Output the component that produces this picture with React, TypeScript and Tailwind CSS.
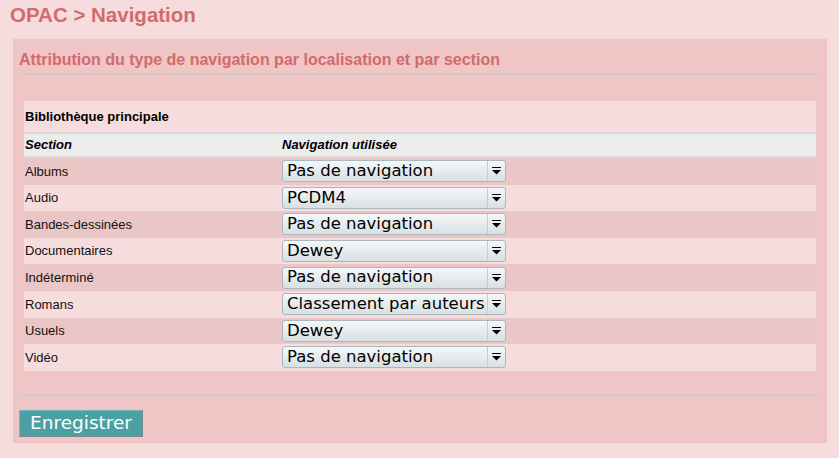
const rows = [
  { section: "Albums", nav: "Pas de navigation" },
  { section: "Audio", nav: "PCDM4" },
  { section: "Bandes-dessinées", nav: "Pas de navigation" },
  { section: "Documentaires", nav: "Dewey" },
  { section: "Indéterminé", nav: "Pas de navigation" },
  { section: "Romans", nav: "Classement par auteurs" },
  { section: "Usuels", nav: "Dewey" },
  { section: "Vidéo", nav: "Pas de navigation" },
];

function FakeSelect({ value }: { value: string }) {
  return (
    <div className="flex h-[22px] w-[224px] items-stretch rounded-[3px] border border-[#a9b8bf] bg-gradient-to-b from-[#f5f7f8] to-[#d8e0e3]">
      <div className="flex flex-1 items-center overflow-hidden whitespace-nowrap pl-[4px] font-['DejaVu_Sans',sans-serif] text-[16.5px] leading-none text-black">
        {value}
      </div>
      <div className="flex w-[18px] flex-col items-center justify-center border-l border-[#c2ced3]">
        <div className="h-px w-[9px] bg-black"></div>
        <svg width="9" height="5" viewBox="0 0 9 5" className="mt-[2px]">
          <path d="M0 0 H9 L4.5 4.5 Z" fill="#000" />
        </svg>
      </div>
    </div>
  );
}

export default function App() {
  return (
    <div className="h-[458px] w-[839px] bg-[#f7dcdd] pt-[2px] font-['Liberation_Sans',Arial,sans-serif]">
      <h1 className="h-[37px] pl-[10px] text-[20.5px] font-bold leading-[25px] text-[#d26b6c]">
        OPAC &gt; Navigation
      </h1>

      <div className="ml-[13px] w-[814px] bg-[#efc5c5] px-[6px] pt-[10px] pb-[6px]">
        <h2 className="h-[26px] border-b-2 border-[#cdcccb] text-[16px] font-bold leading-[22px] text-[#d26b6c]">
          Attribution du type de navigation par localisation et par section
        </h2>

        <div className="mx-[5px] mt-[26px] w-[792px]">
          <div className="flex h-[31px] items-center bg-[#f7dcdd] pl-[1px] pt-[1px] text-[13px] font-bold text-black">
            Bibliothèque principale
          </div>
          <div className="flex h-[26px] items-center border-y-2 border-[#d7d7d7] bg-[#ececec] text-[13px] font-bold italic text-black">
            <div className="w-[258px] pl-[1px]">Section</div>
            <div>Navigation utilisée</div>
          </div>
          {rows.map((row, i) => (
            <div
              key={row.section}
              className={`flex h-[26.6px] items-center text-[13px] text-[#111] ${
                i % 2 === 0 ? "bg-[#ebc6c6]" : "bg-[#f7dcdd]"
              }`}
            >
              <div className="w-[258px] pl-[1px]">{row.section}</div>
              <FakeSelect value={row.nav} />
            </div>
          ))}
        </div>

        <div className="mt-[23px] h-[2px] bg-[#cdcccb]"></div>

        <button className="mt-[14px] h-[27px] w-[124px] border border-t-[#6fb8bb] border-l-[#6fb8bb] border-r-[#7d8a8b] border-b-[#7d8a8b] bg-[#4ba0a4] font-['DejaVu_Sans',sans-serif] text-[18.5px] leading-none text-white">
          Enregistrer
        </button>
      </div>
    </div>
  );
}
